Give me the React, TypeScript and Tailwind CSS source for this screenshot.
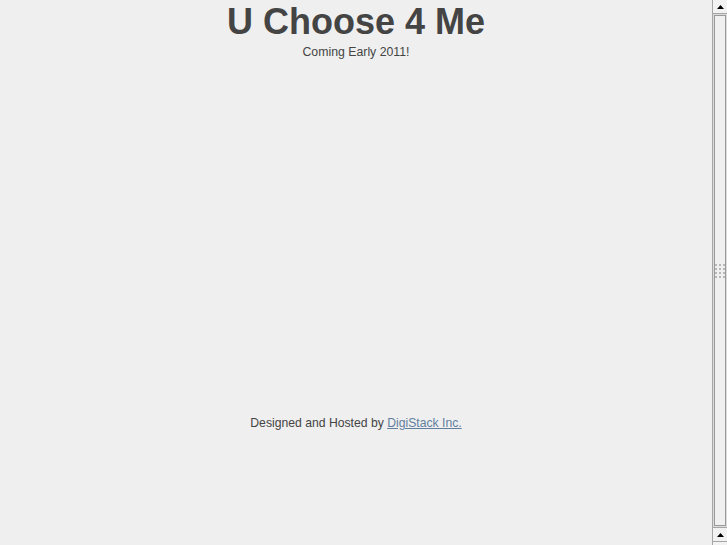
import React from "react";

function Arrow() {
  return (
    <svg width="7" height="4" viewBox="0 0 7 4" className="block">
      <path d="M3.5 0 L7 4 L0 4 Z" fill="#000" />
    </svg>
  );
}

function Scrollbar() {
  return (
    <div className="flex h-full w-[15px] shrink-0 flex-col border-l border-[#a6a6a6] bg-[#dcdcdc]">
      <div className="flex h-[14px] items-center justify-center border-b border-[#a6a6a6] bg-[#f2f2f2]">
        <Arrow />
      </div>
      <div className="flex flex-1 flex-col px-px py-px">
        <div className="flex flex-1 items-center justify-center border border-[#9a9a9a] bg-[#f0f0f0]">
          <div className="grid grid-cols-3 gap-[2px]">
            {Array.from({ length: 12 }).map((_, i) => (
              <span key={i} className="block h-[2px] w-[2px] bg-[#b8b8b8]" />
            ))}
          </div>
        </div>
      </div>
      <div className="flex h-[14px] items-center justify-center border-t border-[#a6a6a6] bg-[#f2f2f2]">
        <Arrow />
      </div>
      <div className="h-[4px] border-t border-[#a6a6a6] bg-[#f2f2f2]" />
    </div>
  );
}

export default function App() {
  return (
    <div className="flex h-[545px] w-[727px] overflow-hidden bg-[#efefef] font-['Liberation_Sans',Arial,sans-serif] text-[#444]">
      <main className="flex flex-1 flex-col items-center">
        <h1 className="mt-[1px] text-[36px] font-bold leading-[42px]">U Choose 4 Me</h1>
        <p className="mt-[2px] text-[12.3px] leading-[14px]">Coming Early 2011!</p>
        <p className="mt-[357px] text-[12.2px] leading-[14px]">
          Designed and Hosted by{" "}
          <a href="#" className="text-[#62809e] underline">
            DigiStack Inc.
          </a>
        </p>
      </main>
      <Scrollbar />
    </div>
  );
}
